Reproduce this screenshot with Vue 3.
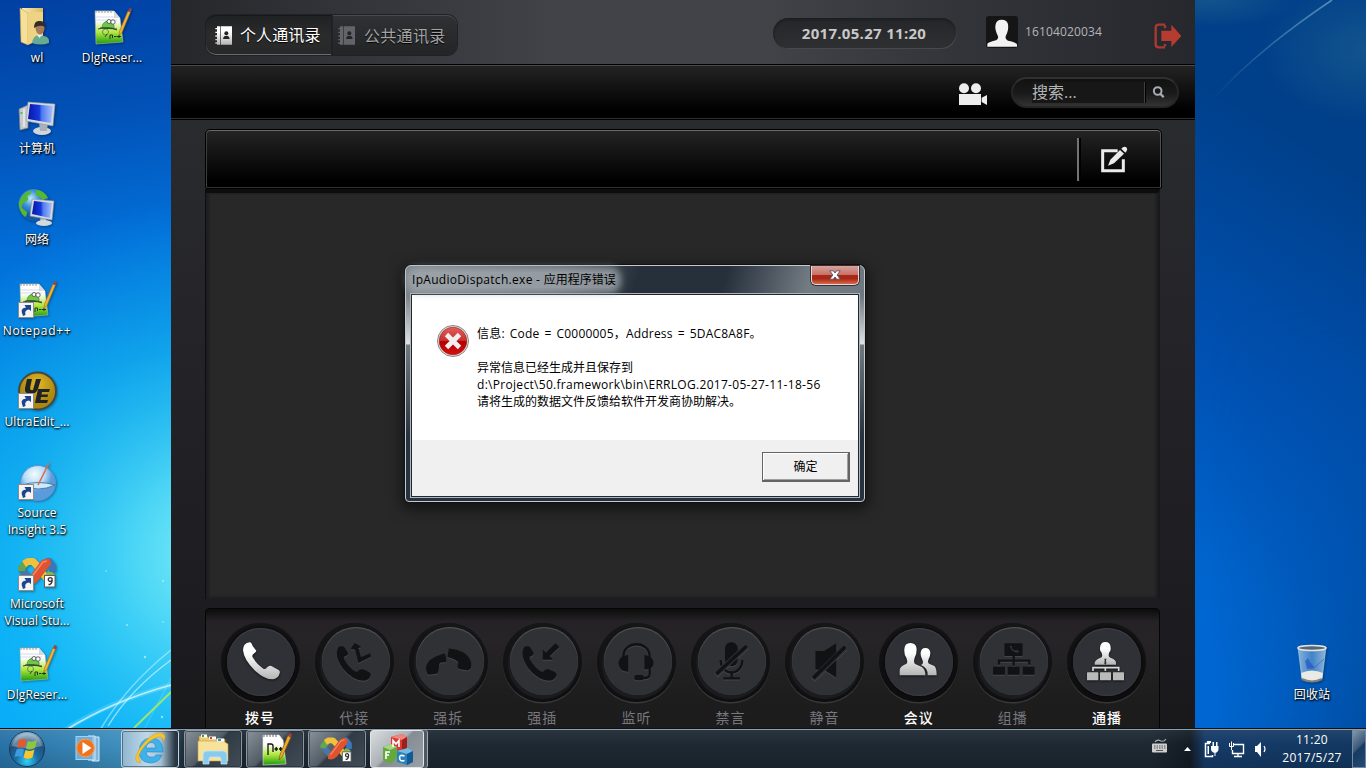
<script setup>
const desktopIcons = [
  { id: 'user', lines: ['wl'] },
  { id: 'pc', lines: ['计算机'] },
  { id: 'net', lines: ['网络'] },
  { id: 'npp', lines: ['Notepad++'], link: true, wide: true },
  { id: 'ue', lines: ['UltraEdit_...'], link: true },
  { id: 'si', lines: ['Source', 'Insight 3.5'], link: true },
  { id: 'vs', lines: ['Microsoft', 'Visual Stu...'], link: true },
  { id: 'npp', lines: ['DlgReser...'] },
]
const secondColumn = [{ id: 'npp', lines: ['DlgReser...'] }]
const actions = [
  { name: '拨号', on: true, vb: '108 116 144 144', icon: 'dial' },
  { name: '代接', vb: '391 116 144 144', icon: 'pickup' },
  { name: '强拆', vb: '673 116 144 144', icon: 'hang' },
  { name: '强插', vb: '-35 116 144 144', icon: 'barge' },
  { name: '监听', vb: '248 116 144 144', icon: 'listen' },
  { name: '禁言', vb: '529 116 144 144', icon: 'mic' },
  { name: '静音', vb: '811 116 144 144', icon: 'mute' },
  { name: '会议', on: true, vb: '106 116 144 144', icon: 'meet' },
  { name: '组播', vb: '385 116 144 144', icon: 'group' },
  { name: '通播', on: true, vb: '669 116 144 144', icon: 'cast' },
]
</script>

<template>
  <div class="desktop">
    <svg class="wall" width="1366" height="768" viewBox="0 0 1366 768">
      <defs>
        <linearGradient id="wl" gradientUnits="userSpaceOnUse" x1="10" y1="0" x2="120" y2="640">
          <stop offset="0" stop-color="#0140a2" /><stop offset=".2" stop-color="#0252b8" />
          <stop offset=".4" stop-color="#0271da" /><stop offset=".62" stop-color="#0291ea" />
          <stop offset=".85" stop-color="#04a5f4" /><stop offset="1" stop-color="#02a9fa" />
        </linearGradient>
        <radialGradient id="glow" gradientUnits="userSpaceOnUse" cx="225" cy="555" r="360">
          <stop offset="0" stop-color="#8bf3f6" /><stop offset=".25" stop-color="#5ee2f6" stop-opacity=".8" />
          <stop offset=".6" stop-color="#24c6f2" stop-opacity=".4" /><stop offset="1" stop-color="#10b0f0" stop-opacity="0" />
        </radialGradient>
        <linearGradient id="wr" gradientUnits="userSpaceOnUse" x1="1366" y1="170" x2="1110" y2="590">
          <stop offset="0" stop-color="#003f89" /><stop offset=".5" stop-color="#0051b2" /><stop offset=".85" stop-color="#0064cd" /><stop offset="1" stop-color="#0067d2" />
        </linearGradient>
        <linearGradient id="fade" x2="0" y2="1"><stop offset="0" stop-color="#000" /><stop offset="1" stop-color="#fff" /></linearGradient>
        <mask id="low"><rect x="1195" y="300" width="171" height="468" fill="url(#fade)" /></mask>
        <linearGradient id="wr2" gradientUnits="userSpaceOnUse" x1="1210" y1="0" x2="1366" y2="0">
          <stop offset="0" stop-color="#004a9c" stop-opacity="0" /><stop offset="1" stop-color="#004a9c" stop-opacity=".9" />
        </linearGradient>
        <radialGradient id="haze"><stop offset="0" stop-color="#1e6290" stop-opacity=".6" /><stop offset="1" stop-color="#1e6290" stop-opacity="0" /></radialGradient>
        <linearGradient id="ray" gradientUnits="userSpaceOnUse" x1="1215" y1="100" x2="1330" y2="0">
          <stop offset="0" stop-color="#78aacb" stop-opacity="0" /><stop offset="1" stop-color="#78aacb" stop-opacity=".7" />
        </linearGradient>
      </defs>
      <rect width="180" height="768" fill="url(#wl)" /><rect width="180" height="768" fill="url(#glow)" />
      <g fill="none" stroke="#eaffff">
        <path d="M62 732Q105 703 171 685" stroke-width="5" opacity=".16" />
        <path d="M66 730Q110 702 171 685" stroke-width="1.800" opacity=".7" />
        <path d="M100 730Q126 686 171 650" stroke-width="1.500" opacity=".45" />
        <path d="M108 726Q130 690 171 660" opacity=".6" stroke-width="1.300" />
        <path d="M145 728L171 678" opacity=".2" />
        <path d="M134 728L171 692" stroke="#a5ea68" stroke-width="2" opacity=".9" />
      </g>
      <g fill="#d9ffff" opacity=".6"><circle cx="145" cy="657" r="1.200" /><circle cx="127" cy="625" r="1" /><circle cx="163" cy="581" r="1" /><circle cx="106" cy="571" r=".8" /><circle cx="163" cy="622" r=".8" /><circle cx="162" cy="717" r="1.200" /></g>
      <rect x="1195" width="171" height="768" fill="url(#wr)" />
      <rect x="1195" y="300" width="171" height="468" fill="url(#wr2)" mask="url(#low)" />
      <ellipse cx="1366" cy="50" rx="110" ry="75" fill="url(#haze)" /><ellipse cx="1210" cy="0" rx="90" ry="28" fill="url(#haze)" />
      <path d="M1205 108Q1250 55 1332 0" fill="none" stroke="url(#ray)" stroke-width="1.600" />
    </svg>

    <svg width="0" height="0" class="defs">
      <defs>
        <linearGradient id="folder" x2="1"><stop stop-color="#f9eab4" /><stop offset="1" stop-color="#d9b95e" /></linearGradient>
        <linearGradient id="screen" x2="1"><stop stop-color="#0718a6" /><stop offset=".45" stop-color="#1539e0" /><stop offset=".55" stop-color="#4d7bf0" /><stop offset="1" stop-color="#a8c2fa" /></linearGradient>
        <linearGradient id="grass" x2="0" y2="1"><stop offset=".3" stop-color="#fff" /><stop offset=".65" stop-color="#b0e83e" /><stop offset="1" stop-color="#1c9a10" /></linearGradient>
        <radialGradient id="globe" cx=".4" cy=".3"><stop stop-color="#bfeaff" /><stop offset=".5" stop-color="#3e93d8" /><stop offset="1" stop-color="#155aa8" /></radialGradient>
        <radialGradient id="gold" cx=".5" cy=".3"><stop stop-color="#e0b928" /><stop offset="1" stop-color="#ab8811" /></radialGradient>
        <radialGradient id="ball" cx=".4" cy=".25"><stop stop-color="#f5fbff" /><stop offset=".6" stop-color="#b4dbf8" /><stop offset="1" stop-color="#5a9bdc" /></radialGradient>
        <linearGradient id="bin" x2="1"><stop stop-color="#a7cdec" /><stop offset=".5" stop-color="#5193d8" /><stop offset="1" stop-color="#b3d3ef" /></linearGradient>
        <linearGradient id="white" x2="0" y2="1"><stop offset=".3" stop-color="#fff" /><stop offset="1" stop-color="#b4b4b4" /></linearGradient>
      </defs>
      <symbol id="i-user" viewBox="0 0 48 48">
        <path d="M9 4H30V40L9 38Z" fill="url(#folder)" /><path d="M7 4L15 9V41L8 38Z" fill="#f6df96" stroke="#c9a552" stroke-width=".6" /><path d="M15 8H30V34L15 41Z" fill="#eed384" />
        <path d="M19 39Q20 32 25 31L31 32Q37 33 36 39Q28 42 19 39Z" fill="#68ab91" /><path d="M24 31L26.500 34L29 31Z" fill="#eee" />
        <ellipse cx="27" cy="24" rx="4.500" ry="6.500" fill="#a87a57" /><path d="M21 24Q21 16 27 17Q33 17 32 23Q27 20 21 24Z" fill="#342c26" />
      </symbol>
      <symbol id="i-pc" viewBox="0 0 48 48">
        <path d="M6 14L15 10V33L7 35Z" fill="#c5cbd0" stroke="#79818a" stroke-width=".8" /><circle cx="8.500" cy="18" r="1.100" fill="#36c43c" /><path d="M11 14V32" stroke="#fff" />
        <ellipse cx="29" cy="36" rx="9" ry="4" fill="#d0d6da" /><path d="M26 27H35L34 36H27Z" fill="#a9b0b7" />
        <path d="M15 7L42 9L40 31L13 26Z" fill="#d5dadf" stroke="#8c959e" stroke-width=".6" /><path d="M17 9L40 11L38 28L15 24Z" fill="url(#screen)" />
      </symbol>
      <symbol id="i-net" viewBox="0 0 48 48">
        <circle cx="21" cy="19" r="16" fill="url(#globe)" /><path d="M8 12Q13 4 19 5Q18 9 14 10Q17 14 12 16Q8 18 9 22L14 26Q14 30 12 31Q5 25 6 16ZM23 4Q31 4 35 12L29 14Q28 10 23 10Z" fill="#54b832" />
        <path d="M28 27H34L33 36H27Z" fill="#b5bbc1" /><ellipse cx="31" cy="37" rx="8" ry="3" fill="#d4d9dd" /><path d="M19 13L41 15L39 34L17 30Z" fill="#d5dadf" stroke="#89929b" stroke-width=".6" /><path d="M21 15L39 17L37 32L19 28Z" fill="url(#screen)" />
      </symbol>
      <symbol id="i-npp" viewBox="0 0 48 48">
        <path d="M7 7H26L32 14L35 38L8 40Z" fill="url(#grass)" stroke="#b6bcae" stroke-width=".6" /><path d="M26 7V14H32Z" fill="#d5dbe2" />
        <path d="M8 6v3m3-3v3m3-3v3m3-3v3m3-3v3m3-3v3" stroke="#8a8f99" stroke-width=".9" />
        <path d="M8 13H27M8 16H29" stroke="#c6d1e3" stroke-width=".8" />
        <path d="M14 24Q14 18 20 17Q27 19 26 24Z" fill="#6cc845" stroke="#46803a" stroke-width=".7" /><circle cx="17.500" cy="28" r="3" fill="none" stroke="#55884b" stroke-width=".9" /><path d="M10 25Q20 22 29 26M12 24L29 25M19 30L17 33" stroke="#2b3d28" fill="none" stroke-width=".9" /><circle cx="21" cy="17.500" r="2" fill="#fff" stroke="#444" stroke-width=".8" /><circle cx="25" cy="18" r="2.200" fill="#fff" stroke="#444" stroke-width=".8" />
        <path d="M22 35V31H24.500V34M26 32.500H28.500M29 32.500H33M31 31V34" fill="none" stroke="#222" stroke-width=".9" />
        <path d="M31 31L31.500 27L40 7L42.500 8L34 28.500Z" fill="#f0b536" stroke="#a96a18" stroke-width=".6" /><path d="M40 7L41.500 4L44 5L42.500 8.500Z" fill="#9c4640" />
      </symbol>
      <symbol id="i-ue" viewBox="0 0 48 48">
        <circle cx="24.500" cy="23" r="18.500" fill="url(#gold)" stroke="#45453f" stroke-width="1.800" />
        <path d="M14 11H19L17 20Q17 23 20 22L23 11H28L25 21Q23 26 18 26Q11 26 12 20Z" fill="#202225" /><path d="M25 21H37L36 24H29L28.500 26.500H35L34.500 29H28L27.500 32H35L34 35H22Z" fill="#202225" />
      </symbol>
      <symbol id="i-si" viewBox="0 0 48 48">
        <circle cx="25" cy="24" r="17.500" fill="url(#ball)" stroke="#5c93cf" /><path d="M9 26Q25 21 42 26Q25 34 9 26Z" fill="#cde9fd" stroke="#487297" stroke-width=".9" /><path d="M25 26L36 4" stroke="#e0694a" stroke-width="1.500" />
      </symbol>
      <symbol id="i-vs" viewBox="0 0 48 48">
        <g transform="translate(0 2)">
          <g fill="none" stroke-width="7" stroke-linejoin="round">
            <path d="M9 18L15 25L20 30" stroke="#4577ad" /><path d="M8.500 19V16L14 10" stroke="#63a64c" />
            <path d="M11 12L15 9.500H20L28 18" stroke="#f1c03c" />
            <path d="M25 16L35 28" stroke="#f4bf33" /><path d="M33 28L39 20" stroke="#83b645" /><path d="M33 9.500H36L39.500 14V20" stroke="#3b76bb" />
          </g>
          <path d="M14 28L28 9Q31 6 37 7L38 12L25 29Q20 34 14 32Z" fill="#df5330" /><path d="M17 27L30 10L34 9" fill="none" stroke="#f28864" stroke-width="1.500" />
          <rect x="31.500" y="23.500" width="10.500" height="11.500" fill="#fff" stroke="#5d5d5d" /><path d="M39 28.500Q37.500 30 36 29Q34.500 27.500 36 26Q37.500 25 39 26.500Q39.500 31 37 32.500H35.500" fill="none" stroke="#333" stroke-width="1.400" />
        </g>
      </symbol>
      <symbol id="i-arrow" viewBox="0 0 16 16"><rect x=".5" y=".5" width="15" height="15" fill="#f4f4f4" stroke="#8c8c8c" /><path d="M5 14Q1 6 8 5.500L6.500 3H13V9L11 7.500Q6 8 7.500 13Z" fill="#1d458f" /></symbol>
    </svg>

    <div class="icon-area">
      <div class="column">
        <div v-for="(it, i) in desktopIcons" :key="i" class="shortcut">
          <div class="pic"><svg width="48" height="48"><use :href="'#i-' + it.id" /></svg><svg v-if="it.link" class="link" width="16" height="16"><use href="#i-arrow" /></svg></div>
          <span v-for="l in it.lines" :key="l" class="cap" :class="{ wide: it.wide }">{{ l }}</span>
        </div>
      </div>
      <div class="column">
        <div v-for="it in secondColumn" :key="it.id" class="shortcut">
          <div class="pic"><svg width="48" height="48"><use :href="'#i-' + it.id" /></svg></div>
          <span v-for="l in it.lines" :key="l" class="cap">{{ l }}</span>
        </div>
      </div>
    </div>
    <div class="shortcut recycle">
      <div class="pic"><svg width="48" height="48" viewBox="0 0 48 48"><path d="M10 6L14 38Q24 43 34 38L38 6Z" fill="url(#bin)" fill-opacity=".8" stroke="#a9c8df" stroke-width=".7" /><path d="M13 32Q24 27 35 32L34 38Q24 43 14 38Z" fill="#e9e9e6" /><path d="M14 38Q24 43 34 38" fill="none" stroke="#7d8183" stroke-width="2" /><path d="M17 20L20 17L22 21L27 27L19 28Z" fill="#2456c7" opacity=".7" /><path d="M27 26L36 18" stroke="#2a5d9d" opacity=".6" /><ellipse cx="24" cy="7" rx="14" ry="2.500" fill="#567" stroke="#e4e4e2" stroke-width="1.500" /></svg></div>
      <span class="cap">回收站</span>
    </div>

    <main class="app">
      <header>
        <div class="tabs">
          <div class="tab active"><svg width="17" height="19" viewBox="0 0 51 57"><path fill="url(#white)" d="M6 1H15V56H6ZM17 1H51V56H17ZM1 6H9V10H1ZM1 17H9V21H1ZM1 28H9V32H1ZM1 39H9V43H1ZM1 49H9V53H1Z" /><circle cx="34" cy="22" r="6" fill="#252525" /><path d="M24 39Q25 29 34 29Q43 29 44 39Z" fill="#252525" /></svg><span>个人通讯录</span></div>
          <div class="tab"><svg width="17" height="19" viewBox="0 0 51 57"><path fill="#63646a" d="M6 1H15V56H6ZM17 1H51V56H17ZM1 6H9V10H1ZM1 17H9V21H1ZM1 28H9V32H1ZM1 39H9V43H1ZM1 49H9V53H1Z" /><circle cx="34" cy="22" r="6" fill="#252525" /><path d="M24 39Q25 29 34 29Q43 29 44 39Z" fill="#252525" /></svg><span>公共通讯录</span></div>
        </div>
        <div class="date">2017.05.27 11:20</div>
        <div class="avatar"><svg width="32" height="32" viewBox="0 0 96 96"><path d="M4 92V84Q5 79 30 73Q38 69 36 61Q25 39 29 25Q31 11 47 11Q64 11 66 25Q69 42 59 61Q57 70 66 74Q91 79 93 85V92Z" fill="#f2f2f2" /></svg></div>
        <span class="uid">16104020034</span>
        <svg class="exit" width="28" height="26" viewBox="0 0 84 78"><path d="M33 5H14Q5 5 5 14V64Q5 73 14 73H33M33 7V16M33 70V63" fill="none" stroke="#a93a30" stroke-width="7" /><path d="M22 23H52V5L82 39L52 72V54H22Z" fill="#b43c30" /></svg>
      </header>
      <nav>
        <svg class="cam" width="28" height="23" viewBox="0 0 84 69"><g fill="#ededed"><circle cx="15" cy="16" r="15" /><circle cx="51" cy="16" r="15" /><path d="M0 33H66V66H0ZM68 44L84 36V66L68 57Z" /></g></svg>
        <div class="search"><span>搜索...</span><i></i><svg width="13" height="13" viewBox="0 0 39 39"><circle cx="17" cy="15" r="11.500" fill="none" stroke="#a9acb5" stroke-width="6" /><path d="M25 23L35 34" stroke="#a9acb5" stroke-width="7" /></svg></div>
      </nav>
      <section class="bar">
        <i></i>
        <svg width="27" height="27" viewBox="0 0 81 81"><path d="M50 14H5V74H67V40" fill="none" stroke="#ebebeb" stroke-width="9" /><path d="M21 59L28 41L57 12L69 23L39 52Z" fill="#ebebeb" /><path d="M61 8Q69 -1 77 5Q81 12 73 20Z" fill="#ebebeb" /></svg>
      </section>
      <section class="content"></section>
      <section class="actions">
        <div v-for="a in actions" :key="a.name" class="action" :class="{ on: a.on }">
          <div class="ring"><div class="cap-disc"></div>
            <svg width="48" height="48" :viewBox="a.vb" class="glyph">
              <path v-if="a.icon === 'dial'" fill="url(#white)" d="M133 134Q140 125 151 126Q155 128 158 137L169 151Q168 156 161 160Q155 164 158 171Q170 192 190 205Q196 208 200 202Q207 195 214 197L236 209Q241 212 239 219Q235 234 220 237Q195 238 165 211Q132 180 129 150Q129 140 133 134Z" />
              <g v-if="a.icon === 'pickup' || a.icon === 'barge'" :transform="a.icon === 'barge' ? 'translate(-433)' : ''"><path d="M416 141Q424 135 433 139L445 158Q446 165 436 168Q430 171 434 178Q450 205 468 214Q474 216 478 210Q483 205 490 207L508 215Q515 219 513 226Q508 239 492 241Q460 241 430 205Q408 175 412 152Z" /></g>
              <path v-if="a.icon === 'pickup'" d="M453 146L465 128L486 140L476 143L484 171L511 159L514 169L476 188L466 148Z" />
              <path v-if="a.icon === 'barge'" d="M39 148V178H70L60 168L89 140L77 129L49 157Z" />
              <path v-if="a.icon === 'hang'" d="M679 205Q678 185 705 170L730 160Q738 158 738 168L740 185L722 187Q717 190 718 200L716 215Q714 221 706 221L688 223Q680 221 679 205ZM747 148Q745 143 751 145Q800 150 812 180Q818 195 812 205Q808 211 800 210L778 206Q772 202 774 195L776 186Q770 177 743 170Z" />
              <g v-if="a.icon === 'listen'"><path d="M282 176V170C282 119 361 119 361 170V176M361 200V222Q360 234 342 233" fill="none" stroke="#111214" stroke-width="7" /><path d="M297 164V214Q270 214 267 190Q268 166 297 164ZM345 164V207Q373 209 373 188Q372 168 345 164Z" /><rect x="315" y="224" width="28" height="16" rx="6" /></g>
              <g v-if="a.icon === 'mic'"><rect x="583" y="126" width="38" height="72" rx="18" /><path d="M570 179C570 229 635 229 635 179M603 215V233M578 234H628" fill="none" stroke="#111214" stroke-width="7" /><path d="M556 222L649 137" stroke="#303135" stroke-width="17" /><path d="M560 218L645 140" stroke="#111214" stroke-width="10" stroke-linecap="round" /></g>
              <g v-if="a.icon === 'mute'"><path d="M854 152H880L917 129V232L880 208H854Z" /><path d="M847 236L945 140" stroke="#303135" stroke-width="17" /><path d="M851 230L940 143" stroke="#111214" stroke-width="11" stroke-linecap="round" /></g>
              <path v-if="a.icon === 'meet'" fill="url(#white)" d="M120 225V208Q122 198 139 191Q146 188 140 172Q133 163 134 147Q135 128 152 128Q170 128 171 147Q171 163 165 172Q160 188 168 192L187 200Q197 207 197 225ZM204 225Q205 203 184 194Q194 190 187 176Q182 168 183 157Q184 143 197 143Q211 143 212 157Q212 169 207 176Q202 188 210 191L224 197Q231 202 231 225Z" />
              <g v-if="a.icon === 'group'"><rect x="431" y="129" width="55" height="38" rx="3" /><path d="M415 193V181H506V193M459 164V196" fill="none" stroke="#111214" stroke-width="7" /><path d="M397 199H433V223H397ZM441 199H477V223H441ZM486 199H522V223H486Z" /><path d="M447 136Q449 154 472 158L475 151L466 148L462 151L453 143L455 137Z" fill="#303135" /></g>
              <g v-if="a.icon === 'cast'"><g fill="url(#white)"><path d="M704 193V187Q706 178 722 172Q730 169 724 156Q719 151 720 142Q721 125 736 125Q752 125 752 142Q753 151 748 156Q743 169 751 172Q768 178 768 187V193Z" /></g><g fill="#bababa"><rect x="681" y="216" width="34" height="24" rx="2" /><rect x="720" y="216" width="33" height="24" rx="2" /><rect x="759" y="216" width="33" height="24" rx="2" /></g><path d="M699 212V202H776V212M736 200V212" fill="none" stroke="#d8d8d8" stroke-width="5" /><path d="M733 175H740L738 180L739 190L736 193L733 190L734 180Z" fill="#303137" /></g>
            </svg>
          </div>
          <span>{{ a.name }}</span>
        </div>
      </section>
    </main>

    <div class="dialog">
      <div class="title"><span>IpAudioDispatch.exe - <b>应用程序错误</b></span>
        <div class="close"><svg width="12" height="10" viewBox="0 0 12 10"><path d="M.8 .8H4.300L6 3L7.700 .8H11.200L8.200 5L11.200 9.200H7.700L6 7L4.300 9.200H.8L3.800 5Z" fill="#fff" stroke="#535666" stroke-width=".9" /></svg></div>
      </div>
      <div class="client">
        <div class="message">
          <svg width="32" height="32" viewBox="0 0 32 32"><defs><linearGradient id="err" x2="0" y2="1"><stop stop-color="#e0605c" /><stop offset=".48" stop-color="#c9302e" /><stop offset=".52" stop-color="#b30000" /><stop offset="1" stop-color="#d61010" /></linearGradient></defs><circle cx="16" cy="16" r="15.500" fill="#e4e4e4" stroke="#858585" /><circle cx="16" cy="16" r="13.800" fill="url(#err)" stroke="#a51414" stroke-width=".6" /><path d="M9.500 9.500L22.500 22.500M22.500 9.500L9.500 22.500" stroke="#f0f0f0" stroke-width="4.800" /></svg>
          <div class="text">
            <p class="l1">信息: Code = C0000005，Address = 5DAC8A8F。</p>
            <p>&nbsp;</p>
            <p class="cn">异常信息已经生成并且保存到</p>
            <p class="path">d:\Project\50.framework\bin\ERRLOG.2017-05-27-11-18-56</p>
            <p class="cn">请将生成的数据文件反馈给软件开发商协助解决。</p>
          </div>
        </div>
        <div class="foot"><button>确定</button></div>
      </div>
    </div>

    <footer class="taskbar">
      <svg class="orb" width="38" height="38" viewBox="0 0 38 38"><defs><radialGradient id="orb" cx=".5" cy=".85" r=".8"><stop stop-color="#2fd3f5" /><stop offset=".4" stop-color="#1a6da6" /><stop offset=".75" stop-color="#234f78" /><stop offset="1" stop-color="#8db0c9" /></radialGradient></defs><circle cx="19" cy="19" r="17.500" fill="url(#orb)" stroke="#163b5a" /><path d="M4 16Q7 4 19 3.500Q31 4 34 16Q19 20 4 16Z" fill="#fff" opacity=".3" /><path d="M11 10Q15 8 18.500 10L16.500 18Q13 16 9 18Z" fill="#e8572a" /><path d="M20 11Q24 13 29 10L27 18Q22 20.500 18 18.500Z" fill="#8dc63f" /><path d="M8.500 19.500Q12 17.500 16 19.500L14 27Q10 25.500 6.500 27Z" fill="#3d9ce0" /><path d="M17.500 20Q22 22 26.500 19.500L24.500 27.500Q20 30 15.500 27.500Z" fill="#fbc52d" /></svg>
      <svg class="wmp" width="30" height="28" viewBox="0 0 30 28"><path d="M17 2H24V26H17Z" fill="#7db5db" stroke="#d3ebfa" /><path d="M13 1H20V25H13Z" fill="#86bce2" stroke="#d3ebfa" /><rect x="1" y="1.500" width="17" height="23" fill="#6faedb" stroke="#a7d1ef" /><circle cx="10.500" cy="13" r="8.800" fill="#ef721d" stroke="#ff9c4c" /><path d="M7.500 7L16.500 13L7.500 19Z" fill="#fff" /></svg>
      <div class="task ie"><svg width="36" height="36" viewBox="0 0 36 36"><path fill-rule="evenodd" d="M18 7Q29 6 31 18V21H14Q15 26 19 26Q23 27 24 24H30Q27 32 18 32Q7 31 7 20Q8 8 18 7ZM14 17H24Q23 11 19 11.500Q15 12 14 17Z" fill="#3fb0ea" stroke="#2788c5" stroke-width=".6" /><path d="M8 32Q-1 31 8 17Q19 1 29 2Q36 4 31 11Q32 5 26 6Q16 9 9 20Q4 29 9 30Z" fill="#f6c52e" stroke="#cf9414" stroke-width=".4" /></svg></div>
      <div class="task"><svg width="36" height="36" viewBox="0 0 36 36"><path d="M4 5H12L15 8H30V27H4Z" fill="#eacb70" stroke="#a88231" stroke-width=".6" /><path d="M3 10H28L33 13V30H3Z" fill="#f7e29b" stroke="#c79f44" stroke-width=".6" /><path d="M6 5H12M14 7H21M22 9H29" stroke="#fff" stroke-width="3" /><path d="M7 5H9" stroke="#22a842" stroke-width="2" /><path d="M15 7H17" stroke="#d8432b" stroke-width="2" /><path d="M23 9H26" stroke="#2c8fdc" stroke-width="2" /><path d="M8 33V24Q8 20 12 20H28Q32 20 32 24V33H26V28Q26 26 24 26H16Q14 26 14 28V33Z" fill="#88cbed" stroke="#c0e6fa" stroke-width=".8" /></svg></div>
      <div class="task"><svg width="36" height="36" viewBox="0 0 36 36"><path d="M6 4H22L26 9L29 33L6 34Z" fill="url(#grass)" stroke="#e6e6df" stroke-width=".6" /><path d="M7 3v3m3-3v3m3-3v3m3-3v3m3-3v3" stroke="#667" /><path d="M11 24V13H14Q16 13 16 15V21M17.500 18H21M19.200 16V20M22 18H25.500M23.700 16V20" fill="none" stroke="#111" stroke-width="1.300" /><path d="M22 29L23 24L31 4L34 6L25 26Z" fill="#efad29" stroke="#85551a" stroke-width=".7" /><path d="M31 5L32 2L35 3L34 7Z" fill="#9d443e" /></svg></div>
      <div class="task"><svg width="38" height="38" viewBox="2 -1 46 46"><use href="#i-vs" width="48" height="48" /></svg></div>
      <div class="task mfc"><svg width="36" height="36" viewBox="0 0 36 36"><path d="M12 6L23 3L28 6V17L23 21L12 18Z" fill="#d93a35" /><path d="M12 6L23 3L28 6L23 9Z" fill="#f2867d" /><path d="M23 9L28 6V17L23 21Z" fill="#9d1f1b" /><path d="M4 16L12 13L18 16V27L11 33L4 29Z" fill="#64a83e" /><path d="M4 16L12 13L18 16L11 19Z" fill="#a8d688" /><path d="M18 20L29 17L34 20V31L28 34L18 31Z" fill="#2782bd" /><path d="M18 20L29 17L34 20L28 23Z" fill="#75bae0" /><path d="M28 23L34 20V31L28 34Z" fill="#135b95" /><path d="M14 16V9.500L17 13L20 9.500V16M7 28V21H11M7 24H10M25.500 25Q20.500 23 20.500 27Q21 31 25.500 29.500" fill="none" stroke="#fff" stroke-width="1.600" /></svg></div>
      <div class="tray">
        <svg width="120" height="40" viewBox="0 0 120 40"><path d="M4 13Q6 10 10 12Q13 13 15 10" fill="none" stroke="#aaa" stroke-width="1.200" /><rect x="1" y="14.500" width="15" height="9" rx="1" fill="#cfcfcf" /><path d="M3 17H15M3 19H15" stroke="#555" stroke-dasharray="1.500 1" /><path d="M5 21.500H12" stroke="#555" /><path d="M33 22L36.500 18L40 22Z" fill="#fff" />
          <path d="M59 14.500H54.500V27.500H61.500V26" stroke="#fff" stroke-width="1.500" fill="none" /><path d="M56 12H60V14H56ZM56.500 17H58V25H56.500Z" fill="#fff" /><path d="M60 17H67.500V20Q67.500 23 64 24Q60 23 60 20ZM61.500 13H63V17H61.500ZM65 13H66.500V17H65ZM63.500 24H64.500V27H63.500Z" fill="#fff" />
          <path d="M83 15.500H92.500V24.500H81.500V21M83 27.500H91M87 24V28" fill="none" stroke="#fff" stroke-width="1.400" /><path d="M78.500 14V17.500H82.500V14M80.500 12.500V21" fill="none" stroke="#fff" /><path d="M104 17H106L110 13V28L106 23H104Z" fill="#fff" /><path d="M113 17Q115 20 113 23" fill="none" stroke="#fff" stroke-width="1.200" /></svg>
      </div>
      <div class="clock"><span>11:20</span><span>2017/5/27</span></div>
      <div class="peek"></div>
    </footer>
  </div>
</template>

<style>
body { overflow: hidden; background: #004a9c; }
</style>
<style scoped>
* { box-sizing: border-box; }
.desktop { position: relative; width: 1366px; height: 768px; overflow: hidden; font: 12px/17px "Open Sans", "Noto Sans CJK SC", sans-serif; }
.wall, .defs { position: absolute; left: 0; top: 0; }
svg { display: block; flex: none; }
.icon-area { position: absolute; left: 0; top: 4px; display: flex; gap: 1px; }
.column { width: 74px; }
.shortcut { width: 74px; height: 91px; display: flex; flex-direction: column; align-items: center; }
.pic { position: relative; width: 48px; height: 45px; flex: none; filter: drop-shadow(1px 1px 1px #0005); }
.link { position: absolute; left: 5px; bottom: 4px; }
.cap { color: #fff; font-size: 12px; line-height: 17px; letter-spacing: .1px; white-space: nowrap; text-shadow: 1px 1px 2px #000, 0 1px 2px #000; }
.cap.wide { letter-spacing: .7px; }
.recycle { position: absolute; left: 1275px; top: 641px; }

.app { position: absolute; left: 171px; top: 0; width: 1024px; height: 729px; display: flex; flex-direction: column; background: linear-gradient(#2a2b2f 120px, #242428 350px, #1d1d21 600px, #19191c); }
header { height: 64px; flex: none; display: flex; padding: 0 13px 0 35px; background: linear-gradient(90deg, #26272b, #313237 14%, #424348 38%, #424348 58%, #33343a 77%, #27282d); }
.tabs { display: flex; gap: 2px; padding-top: 15px; }
.tab { width: 124px; height: 40px; display: flex; align-items: center; font-size: 16px; color: #a3a3a3; border-radius: 0 10px 10px 0; background: linear-gradient(#303134, #232426); border-top: 1px solid #494a4e; box-shadow: 0 0 0 1px #202124; padding-left: 5px; }
.tab span { margin-left: 9px; line-height: 24px; letter-spacing: .3px; white-space: nowrap; text-shadow: 0 1px 1px #000; }
.tab.active { width: 125px; color: #fff; border-radius: 10px 0 0 10px; background: linear-gradient(#202123, #2b2b2c 50%, #272829); border-top: 1px solid #17181a; border-bottom: 1px solid #6b6b6d; padding-left: 9px; }
.tab.active span { margin-left: 8px; letter-spacing: .1px; }
.date { margin: 18px 0 0 auto; width: 184px; height: 31px; border-radius: 16px; background: linear-gradient(#252629, #2f3032); box-shadow: inset 0 1px 3px #18191c, inset -1px -1px 0 #505156; color: #c8c8c8; font: bold 15px/31px "Open Sans", sans-serif; letter-spacing: .3px; text-align: center; padding-right: 2px; }
.avatar { margin: 16px 0 0 29px; width: 32px; height: 32px; background: #151515; border-radius: 3px; }
.uid { margin: 23px 0 0 7px; width: 129px; color: #b4b4b4; font-size: 12px; line-height: 18px; letter-spacing: .15px; }
.exit { margin-top: 23px; }
nav { height: 56px; flex: none; display: flex; justify-content: flex-end; padding: 12px 16px 0 0; background: linear-gradient(#242424, #000 85%); border-top: 1px solid #000; border-bottom: 1px solid #000; box-shadow: inset 0 1px 0 #4a4a4a, inset 0 -1px 0 #303030; }
.cam { margin: 6px 24px 0 0; }
.search { width: 168px; height: 31px; border-radius: 16px; display: flex; align-items: center; border: 2px solid #262626; border-top-color: #303030; background: linear-gradient(#111, #1a1a1a 55%, #333); padding-left: 19px; color: #b5b5b5; font-size: 16px; }
.search span { width: 112px; height: 21px; line-height: 21px; background: #171717; }
.search i { width: 2px; height: 21px; background: #000; border-left: 1px solid #404040; margin-right: 6px; }
.bar { margin: 9px 0 0 34px; width: 957px; height: 60px; flex: none; display: flex; justify-content: flex-end; align-items: center; padding-right: 33px; border-radius: 5px 5px 2px 2px; background: linear-gradient(#242424, #000 88%); border: 1px solid #000; box-shadow: inset 0 1px 0 #696969, inset 1px 0 0 #3d3d3d, inset -1px 0 0 #505050, inset 0 -1px 0 #303030; }
.bar i { width: 4px; height: 43px; background: #000; border-left: 2px solid #737373; margin-right: 20px; }
.content { margin-left: 34px; width: 955px; height: 410px; flex: none; background: #282828; border: 1px solid #0d0d0e; border-width: 4px 2px 0 1px; border-right-color: #19191b; box-shadow: inset 3px 0 2px #1e1e20, inset -2px 0 2px #1e1e20, inset 0 -3px 3px #222225; }
.actions { margin: 9px 0 0 34px; width: 955px; flex: 1; display: flex; padding: 16px 5px 0 7px; border: 1px solid #050505; border-bottom: 0; border-radius: 5px 5px 0 0; background: linear-gradient(#0c0c0c, #242224 12px, #262426 30px, #1d1d1e 70%, #1b1b1c); }
.action { flex: 1; height: 112px; display: flex; flex-direction: column; align-items: center; color: #77777d; }
.ring { position: relative; width: 79px; height: 79px; border-radius: 50%; margin-top: -2px; background: #161617; box-shadow: 0 1.500px 1px #3c3a3b, inset 0 -2px 5px #0c0c0d, inset 0 2px 3px #1b1b1c; display: flex; align-items: center; justify-content: center; flex: none; }
.cap-disc { position: absolute; left: 7px; top: 4px; width: 68px; height: 68px; border-radius: 50%; background: #303135; box-shadow: inset 0 1px 1px #55585e, inset 0 -1px 1px #343539, -1px 3px 0 1px #1b1c1f; }
.on .cap-disc { left: 6px; top: 5px; background: #303137; box-shadow: inset 0 1px 1px #414248, inset 0 -1px 1px #3b3c42, 0 1px 4px 2px #0a0a0b; }
.glyph { position: relative; fill: #111214; filter: drop-shadow(0 1px 0 #45464a); }
.on .glyph { filter: drop-shadow(0 1px 1px #111); }
.action > span { font-size: 14px; line-height: 20px; letter-spacing: 1px; margin-top: 6px; font-weight: 400; }
.action.on > span { color: #fff; font-weight: 500; }

.dialog { position: absolute; left: 405px; top: 265px; width: 460px; height: 237px; border: 1px solid #c2c9cf; border-radius: 6px 6px 4px 4px; padding: 0 5px 5px; background: linear-gradient(#c0c4c800, #c0c4c800 20px, #d5d8db00 30px, #e0e2e4 78px, #727a81 79px, #26323d 170px) , linear-gradient(105deg, #7e868d, #5d666e 30%, #26303b 45%, #26303b 62%, #727a82 78%, #6c757d); box-shadow: 0 0 0 1px #111, 0 4px 14px 3px #0008; }
.title { height: 28px; display: flex; padding-left: 1px; color: #000; }
.title span { position: relative; height: 16px; margin: 6px 0 0; line-height: 16px; white-space: nowrap; letter-spacing: .3px; background: #a5abb0c0; border-radius: 6px; box-shadow: 0 0 7px 5px #a5abb0c0; }
.title b { font-weight: 400; letter-spacing: 0; }
.close { margin-left: auto; width: 48px; height: 19px; border: 1px solid #dedede; border-top: 0; border-radius: 0 0 5px 5px; background: linear-gradient(#d8a39d, #c77167 48%, #ac2817 52%, #a82714 70%, #d8674e); display: flex; align-items: center; justify-content: center; box-shadow: 0 0 0 1px #3a2d30; }
.client { width: 448px; height: 203px; border: 1px solid #1e2830; box-shadow: 0 0 0 1px #aeb5ba; background: #fff; display: flex; flex-direction: column; }
.message { flex: 1; display: flex; padding: 30px 0 0 25px; }
.text { margin-left: 8px; color: #000; }
p { margin: 0; height: 17px; line-height: 17px; white-space: nowrap; }
.l1 { letter-spacing: .2px; word-spacing: 1.700px; }
.path { letter-spacing: .3px; }
.foot { height: 56px; background: #f0f0f0; padding: 12px 8px 0 0; display: flex; justify-content: flex-end; }
button { width: 88px; height: 30px; padding: 0; border: 1px solid #646464; border-right-width: 2px; border-bottom-width: 2px; background: #f0f0f0; box-shadow: inset 1px 1px #fff, inset -1px -1px #a0a0a0; font: inherit; color: #000; }

.taskbar { position: absolute; left: 0; top: 728px; width: 1366px; height: 40px; display: flex; align-items: center; padding-left: 8px; border-top: 1px solid #0b1218; box-shadow: inset 0 1px 0 #8f9da8; background: linear-gradient(#fff1, #fff0 40%, #0002), linear-gradient(90deg, #2872a7, #3e8fbe 120px, #35759f 160px, #1d2832 185px, #1d2832 1150px, #131b24 1190px, #153b68 1205px, #123861); }
.wmp { margin: 0 16px 0 29px; }
.task { width: 58px; height: 38px; margin: 1px 4px 0 0; border: 1px solid #8d979f; border-radius: 3px; display: flex; align-items: center; justify-content: center; background: linear-gradient(135deg, #8a929a, #525d67 45%, #303b46 50%, #414c57); box-shadow: inset 0 0 0 1px #1a232c80; }
.ie { margin-right: 5px; background: linear-gradient(90deg, #8fb6d0, #bfd8e8 45%, #a0bfd2 70%, #2a3744 95%); border-color: #c3d5e2; }
.mfc { width: 54px; background: linear-gradient(135deg, #dadddf, #abb1b6 45%, #858c93 50%, #9aa0a6); border-color: #e2e5e7; box-shadow: 3px 0 0 #4d5862, 4px 0 0 #9fa7ad; }
.tray { margin-left: auto; width: 121px; margin-right: -1px; }
.clock { width: 80px; display: flex; flex-direction: column; align-items: center; color: #fff; font-size: 12px; line-height: 18px; letter-spacing: .3px; margin: 1px 0 0 1px; }
.peek { width: 14px; height: 38px; border: 1px solid #72889f; background: linear-gradient(135deg, #8197ad, #3b5878 45%, #173a61 50%, #234b76); margin-top: 1px; }
</style>
